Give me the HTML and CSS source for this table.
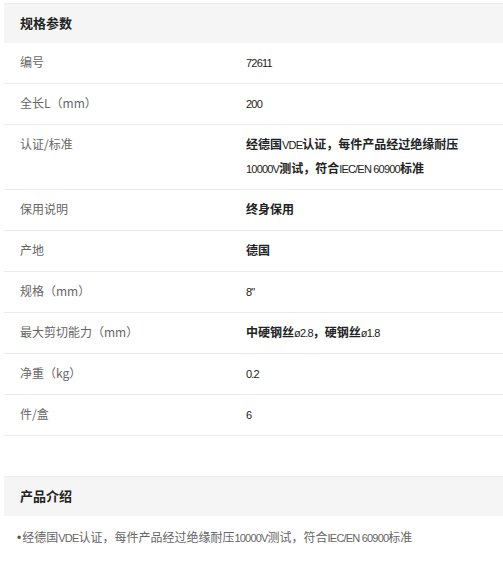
FILE: index.html
```html
<!DOCTYPE html>
<html lang="zh-CN">
<head>
<meta charset="utf-8">
<title>规格参数</title>
<link rel="stylesheet" href="styles.css">
</head>
<body>
<div class="page">
  <section class="block">
    <h2 class="block-title">规格参数</h2>
    <div class="row"><div class="label">编号</div><div class="value"><span class="n">72611</span></div></div>
    <div class="row"><div class="label">全长L（mm）</div><div class="value"><span class="n">200</span></div></div>
    <div class="row"><div class="label">认证/标准</div><div class="value strong">经德国<span class="n">VDE</span>认证，每件产品经过绝缘耐压<span class="n">10000V</span>测试，符合<span class="n">IEC/EN 60900</span>标准</div></div>
    <div class="row"><div class="label">保用说明</div><div class="value strong">终身保用</div></div>
    <div class="row"><div class="label">产地</div><div class="value strong">德国</div></div>
    <div class="row"><div class="label">规格（mm）</div><div class="value"><span class="n">8"</span></div></div>
    <div class="row"><div class="label">最大剪切能力（mm）</div><div class="value strong">中硬钢丝<span class="n">ø2.8</span>，硬钢丝<span class="n">ø1.8</span></div></div>
    <div class="row"><div class="label">净重（kg）</div><div class="value"><span class="n">0.2</span></div></div>
    <div class="row"><div class="label">件/盒</div><div class="value"><span class="n">6</span></div></div>
  </section>
  <section class="block intro">
    <h2 class="block-title">产品介绍</h2>
    <p class="intro-text"><span class="dot">•</span>经德国<span class="n">VDE</span>认证，每件产品经过绝缘耐压<span class="n">10000V</span>测试，符合<span class="n">IEC/EN 60900</span>标准</p>
  </section>
</div>
</body>
</html>
```
FILE: styles.css
```css
html, body {
  margin: 0;
  padding: 0;
  background: #fff;
}
body {
  font-family: "Noto Sans CJK SC", "Liberation Sans", sans-serif;
  font-size: 12px;
  color: #333;
}
.page {
  padding: 3px 0 0 4px;
}
.block-title {
  margin: 0;
  height: 39px;
  line-height: 37px;
  padding: 0 16px;
  background: #f5f5f5;
  border-top: 1px solid #ececec;
  font-size: 13px;
  font-weight: bold;
  color: #222;
}
.row {
  display: grid;
  grid-template-columns: 226px 1fr;
  padding: 7px 0 9px;
  line-height: 24px;
  border-bottom: 1px solid #ebebeb;
}
.label {
  padding-left: 16px;
  color: #666;
}
.value {
  padding: 0 32px 0 16px;
  color: #222;
}
.strong {
  font-weight: bold;
}
.n {
  font-family: "Liberation Sans", sans-serif;
  font-size: 11px;
  line-height: 1;
  letter-spacing: -0.8px;
  font-weight: normal;
}
.intro {
  margin-top: 40px;
}
.intro-text {
  margin: 0;
  padding: 11px 0 0 13px;
  line-height: 20px;
  color: #666;
}
.dot {
  font-family: "Liberation Sans", sans-serif;
  font-size: 12px;
  color: #555;
  margin-right: 1px;
}
```
